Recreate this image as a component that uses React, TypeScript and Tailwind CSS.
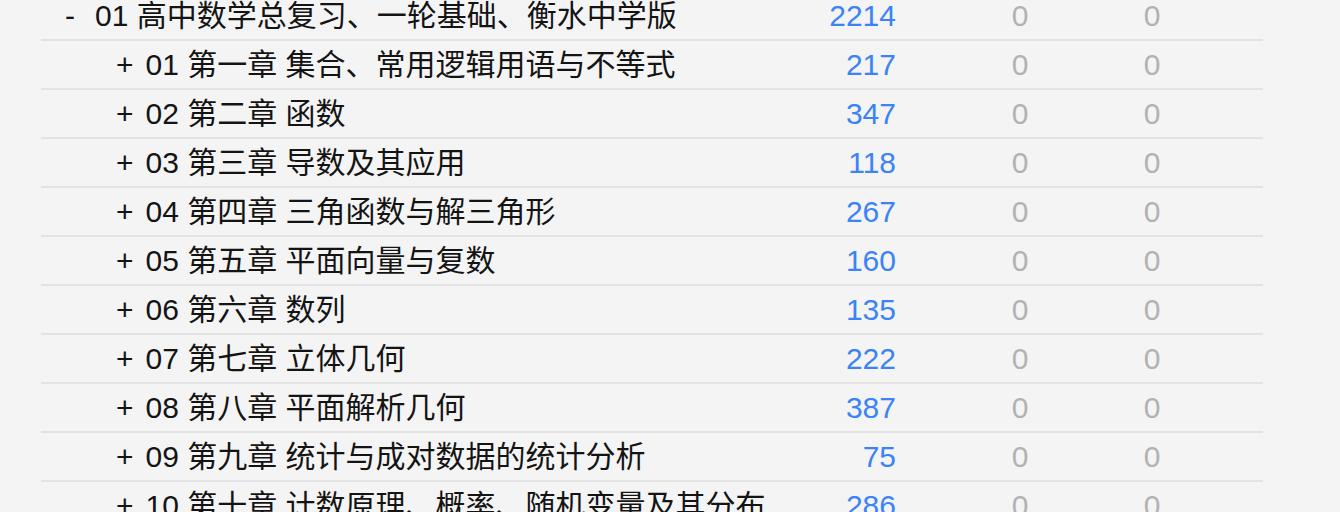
import React from "react";

type Row = { sign: string; code: string; name: string; count: number; child: boolean };

const rows: Row[] = [
  { sign: "-", code: "01", name: "高中数学总复习、一轮基础、衡水中学版", count: 2214, child: false },
  { sign: "+", code: "01", name: "第一章 集合、常用逻辑用语与不等式", count: 217, child: true },
  { sign: "+", code: "02", name: "第二章 函数", count: 347, child: true },
  { sign: "+", code: "03", name: "第三章 导数及其应用", count: 118, child: true },
  { sign: "+", code: "04", name: "第四章 三角函数与解三角形", count: 267, child: true },
  { sign: "+", code: "05", name: "第五章 平面向量与复数", count: 160, child: true },
  { sign: "+", code: "06", name: "第六章 数列", count: 135, child: true },
  { sign: "+", code: "07", name: "第七章 立体几何", count: 222, child: true },
  { sign: "+", code: "08", name: "第八章 平面解析几何", count: 387, child: true },
  { sign: "+", code: "09", name: "第九章 统计与成对数据的统计分析", count: 75, child: true },
  { sign: "+", code: "10", name: "第十章 计数原理、概率、随机变量及其分布", count: 286, child: true },
];

export default function App() {
  return (
    <div
      className="w-[1340px] h-[512px] overflow-hidden bg-[#f4f4f4]"
      style={{ fontFamily: '"Liberation Sans", "Noto Sans CJK SC", sans-serif' }}
    >
      <div className="ml-[41px] w-[1222px] -mt-[8px]">
        {rows.map((r, i) => (
          <div
            key={i}
            className="flex items-center h-[49px] border-b-2 border-[#e3e3e3] text-[30px] leading-[47px] whitespace-nowrap"
          >
            <div
              className={
                "w-[755px] text-[#141414] " + (r.child ? "pl-[75px]" : "pl-[24px]")
              }
            >
              {r.child ? (
                <span>
                  {r.sign}
                  <span className="ml-[12px]">{r.code}</span> {r.name}
                </span>
              ) : (
                <span>
                  {r.sign}
                  <span className="ml-[20px]">{r.code}</span> {r.name}
                </span>
              )}
            </div>
            <div className="w-[100px] text-right text-[#3b83f6]">{r.count}</div>
            <div className="ml-[64px] w-[120px] text-center text-[#b2b2b2]">0</div>
            <div className="ml-[12px] w-[120px] text-center text-[#b2b2b2]">0</div>
          </div>
        ))}
      </div>
    </div>
  );
}
